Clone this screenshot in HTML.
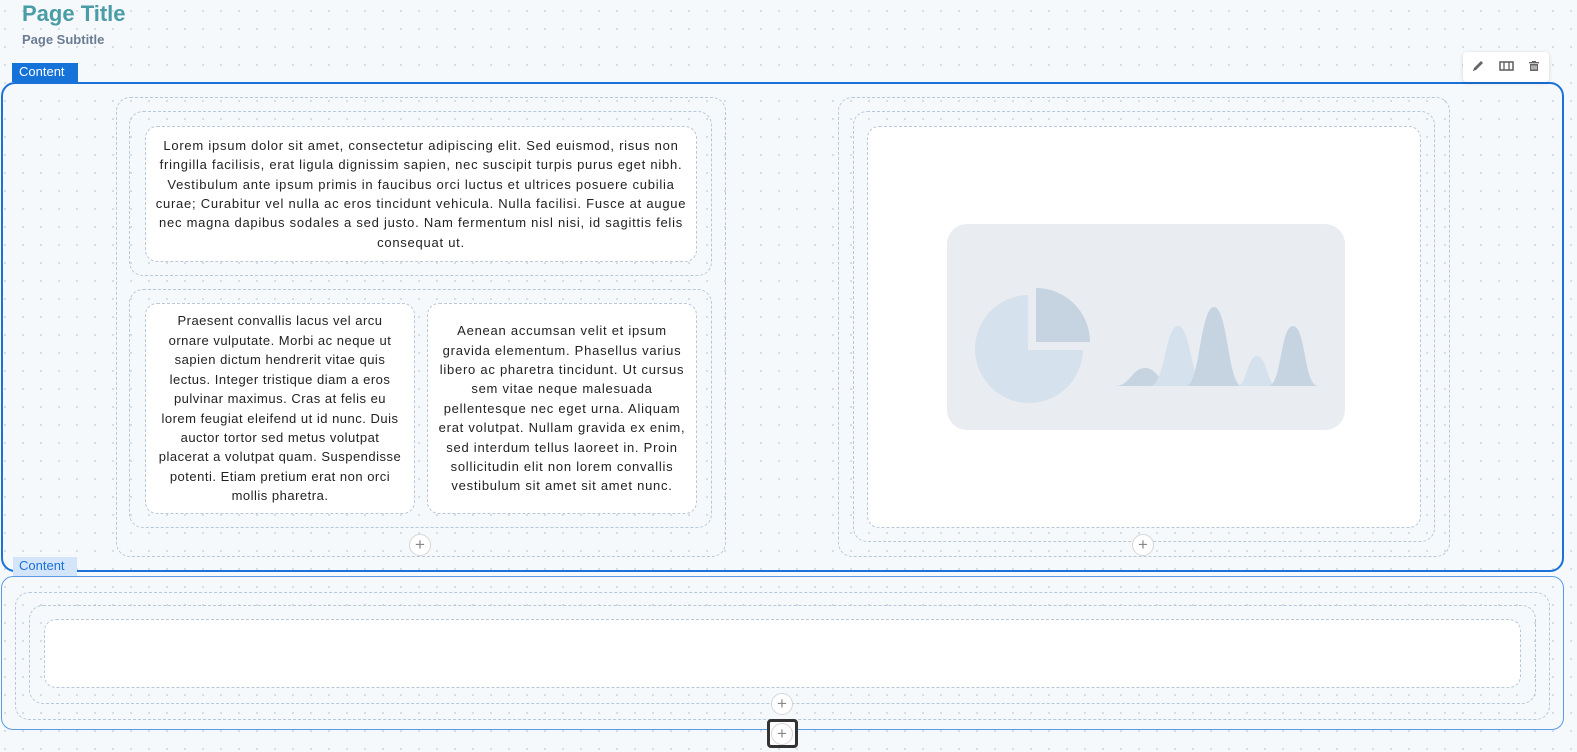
<!DOCTYPE html>
<html style="overflow:hidden;width:1577px;height:752px"><head><meta charset="utf-8"><style>
*{box-sizing:border-box;margin:0;padding:0}
body{width:1577px;height:752px;overflow:hidden;position:relative;font-family:"Liberation Sans",sans-serif;
background-color:#f6f9fb;background-image:radial-gradient(circle,#d3dbe3 1px,transparent 1.2px);background-size:18px 18px;background-position:-4px 2px}
.a{position:absolute}
.d{position:absolute;border:1px dashed #b8c8da;border-radius:14px}
.w{background:#fff;border-radius:12px}
.t{font-size:13px;letter-spacing:0.75px;line-height:19.4px;color:#222;text-align:center;display:flex;align-items:center;justify-content:center;padding:0 8px}
.s{letter-spacing:0.5px}
.p{position:absolute;width:22px;height:22px;border-radius:50%;background:#fff;border:1px solid #d6d6d6;color:#888;font-size:17px;line-height:19px;text-align:center}
</style></head><body>
<div class="a" style="left:22px;top:1px;font-size:22px;font-weight:bold;color:#4a9ca6">Page Title</div>
<div class="a" style="left:22px;top:32px;font-size:13px;font-weight:bold;color:#6b7c93">Page Subtitle</div>

<div class="a" style="left:12px;top:63px;width:66px;height:19px;background:#1572d8;color:#fff;font-size:13px;line-height:18px;padding-left:7px">Content</div>
<div class="a" style="left:1px;top:82px;width:1563px;height:490px;border:2px solid #1a72d8;border-radius:14px"></div>
<div class="a" style="left:1463px;top:52px;width:86px;height:30px;background:#fff;border-radius:4px;box-shadow:0 1px 4px rgba(0,0,0,.15)">
<svg width="86" height="30" viewBox="0 0 86 30"><g fill="#666"><path d="M10 19l1-3 7-7 2 2-7 7z"/><rect x="37" y="10" width="13" height="8" fill="none" stroke="#666" stroke-width="1.6"/><path d="M41 10v8M46 10v8" stroke="#666" stroke-width="1.4"/><path d="M66 10h10v1.4H66zM69 9h4v1h-4zM67 12h8v7h-8z"/><path d="M69 13.5v4M71 13.5v4M73 13.5v4" stroke="#fff" stroke-width="1"/></g></svg></div>

<div class="d" style="left:116px;top:97px;width:610px;height:460px"></div>
<div class="d" style="left:129px;top:111px;width:583px;height:165px"></div>
<div class="d w t" style="left:145px;top:126px;width:552px;height:136px">Lorem ipsum dolor sit amet, consectetur adipiscing elit. Sed euismod, risus non fringilla facilisis, erat ligula dignissim sapien, nec suscipit turpis purus eget nibh. Vestibulum ante ipsum primis in faucibus orci luctus et ultrices posuere cubilia curae; Curabitur vel nulla ac eros tincidunt vehicula. Nulla facilisi. Fusce at augue nec magna dapibus sodales a sed justo. Nam fermentum nisl nisi, id sagittis felis consequat ut.</div>
<div class="d" style="left:129px;top:289px;width:583px;height:239px"></div>
<div class="d w t s" style="left:145px;top:303px;width:270px;height:211px;padding:0 10px">Praesent convallis lacus vel arcu ornare vulputate. Morbi ac neque ut sapien dictum hendrerit vitae quis lectus. Integer tristique diam a eros pulvinar maximus. Cras at felis eu lorem feugiat eleifend ut id nunc. Duis auctor tortor sed metus volutpat placerat a volutpat quam. Suspendisse potenti. Etiam pretium erat non orci mollis pharetra.</div>
<div class="d w t" style="left:427px;top:303px;width:270px;height:211px;padding:0 10px">Aenean accumsan velit et ipsum gravida elementum. Phasellus varius libero ac pharetra tincidunt. Ut cursus sem vitae neque malesuada pellentesque nec eget urna. Aliquam erat volutpat. Nullam gravida ex enim, sed interdum tellus laoreet in. Proin sollicitudin elit non lorem convallis vestibulum sit amet sit amet nunc.</div>
<div class="p" style="left:409px;top:534px">+</div>

<div class="d" style="left:838px;top:97px;width:612px;height:460px"></div>
<div class="d" style="left:853px;top:111px;width:582px;height:431px"></div>
<div class="d w" style="left:867px;top:126px;width:554px;height:402px"></div>
<div class="a" style="left:947px;top:224px;width:398px;height:206px;background:#e9edf2;border-radius:20px"></div>
<svg class="a" style="left:940px;top:280px" width="400" height="130" viewBox="940 280 400 130">
<path d="M1028 295A54 54 0 1 0 1083 350H1028Z" fill="#d5e1ec"/>
<path d="M1036 288A54 54 0 0 1 1090 342H1036Z" fill="#c6d4e1"/>
<path d="M1115 386C1130 386 1132 368 1145 368C1158 368 1160 386 1175 386Z" fill="#c6d4e1"/>
<path d="M1150 386C1165 386 1165 326 1178 326C1191 326 1191 386 1206 386Z" fill="#d5e1ec"/>
<path d="M1186 386C1200 386 1200 307 1214 307C1228 307 1228 386 1242 386Z" fill="#c6d4e1"/>
<path d="M1237 386C1247 386 1247 356 1257 356C1267 356 1267 386 1277 386Z" fill="#d5e1ec"/>
<path d="M1268 386C1282 386 1280 326 1293 326C1306 326 1304 386 1318 386Z" fill="#c6d4e1"/>
</svg>
<div class="p" style="left:1132px;top:534px">+</div>

<div class="a" style="left:13px;top:557px;width:64px;height:19px;background:#d4e5f9;color:#1a72d8;font-size:13px;line-height:18px;padding-left:6px">Content</div>
<div class="a" style="left:1px;top:576px;width:1563px;height:154px;border:1px solid #5b9be6;border-radius:12px"></div>
<div class="d" style="left:15px;top:592px;width:1535px;height:128px"></div>
<div class="d" style="left:29px;top:605px;width:1507px;height:99px"></div>
<div class="d w" style="left:44px;top:619px;width:1477px;height:69px"></div>
<div class="p" style="left:771px;top:693px">+</div>
<div class="a" style="left:767px;top:719px;width:31px;height:29px;border:3px solid #333;border-radius:4px;background:#fff"></div>
<div class="p" style="left:771px;top:723px">+</div>
</body></html>
